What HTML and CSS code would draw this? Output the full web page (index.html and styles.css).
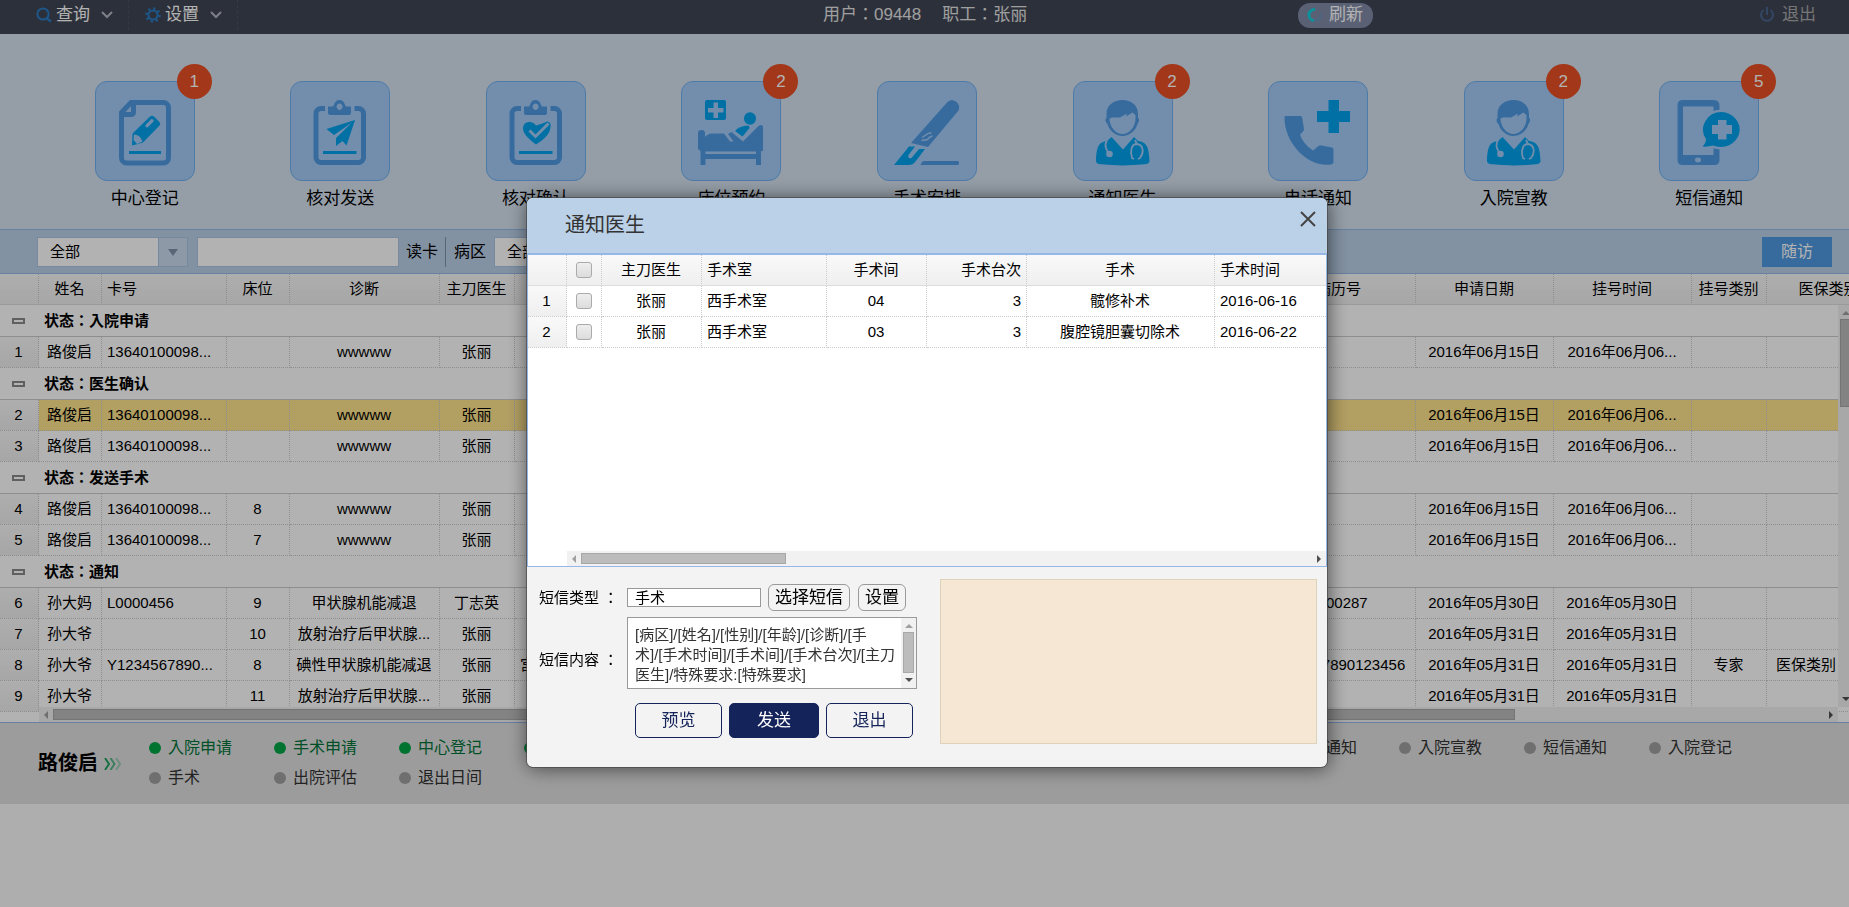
FILE: index.html
```html
<!DOCTYPE html>
<html>
<head>
<meta charset="utf-8">
<title>通知医生</title>
<link rel="stylesheet" href="styles.css">
</head>
<body>
<header class="topbar">
  <nav class="menu">
    <button class="menu-item" type="button">
      <svg width="16" height="16" viewBox="0 0 16 16" fill="none" stroke="#2a7cc4" stroke-width="2"><circle cx="7" cy="7" r="5.6"/><path d="M11 11.500L15 14.500" stroke-width="2.600"/></svg>
      <span>查询</span>
      <svg class="chev" width="12" height="8" viewBox="0 0 12 8" fill="none" stroke="#b4b8c0" stroke-width="2"><path d="M1 1l5 5 5-5"/></svg>
    </button>
    <button class="menu-item" type="button">
      <svg width="16" height="16" viewBox="0 0 16 16" fill="none" stroke="#2a7cc4"><circle cx="8" cy="8" r="4.600" stroke-width="2"/><circle cx="8" cy="8" r="6.600" stroke-width="2.400" stroke-dasharray="2.200 2.984"/></svg>
      <span>设置</span>
      <svg class="chev" width="12" height="8" viewBox="0 0 12 8" fill="none" stroke="#b4b8c0" stroke-width="2"><path d="M1 1l5 5 5-5"/></svg>
    </button>
  </nav>
  <div class="who"><span>用户：09448</span><span>职工：张丽</span></div>
  <button class="refresh" type="button">
    <svg width="16" height="16" viewBox="0 0 16 16" fill="none" stroke-width="3"><path d="M8 2.500A5.500 5.500 0 0 0 7 13.500" stroke="#10d0dc"/><path d="M7 13.500A5.500 5.500 0 0 0 13 6" stroke="#6f93b4"/></svg>
    <span>刷新</span>
  </button>
  <button class="quit" type="button">
    <svg width="16" height="16" viewBox="0 0 16 16" fill="none" stroke="#4a6592" stroke-width="2"><path d="M8 0v8M4.500 3A6 6 0 1 0 11.500 3"/></svg>
    <span>退出</span>
  </button>
</header>

<svg class="defs" width="0" height="0" aria-hidden="true">
  <defs>
    <g id="board">
      <path d="M35 27.500H31a5 5 0 0 0-5 5V76.500a5 5 0 0 0 5 5H68.500a5 5 0 0 0 5-5V32.500a5 5 0 0 0-5-5H64.500" fill="none" stroke="#509ae3" stroke-width="5"/>
      <path fill-rule="evenodd" d="M38 25.500h4.500c2 0 1.500-6.500 7-6.500s5 6.500 7 6.500H61v6.500q0 2-2 2H40q-2 0-2-2zM49.500 22.500a3 3.200 0 1 0 .1 0z" fill="#509ae3"/>
      <path d="M33 71.500H66.500" stroke="#00a1ed" stroke-width="3"/>
    </g>
    <g id="doctor">
      <path fill="#509ae3" fill-rule="evenodd" d="M49.500 19C58 19 65 24 65 33v4c2 1 1 4-.5 6C63 49 57 55 49.500 55S36 49 34.500 43C32 41 32 38 33.500 37v-4C33.500 24 41 19 49.500 19zM36.500 37.500c0 8 6 15.500 13 15.500s13-7.500 13-15.500V34l-2-1.500-1-1-6.500 4 1-3-7 4H39z"/>
      <path fill="#00a1ed" d="M38.500 56L50 68.500 61 56l4 4c8 1 11 5 11.500 20q0 3-5 3.300Q50 85.500 28 83.300q-5-.3-5-3.300C23.500 65 26 61 34 60z"/>
      <path fill="none" stroke="#a4ccf7" stroke-width="1.800" d="M34 59c-3 5-1 11 3 14M62 59l2 4c-6 0-7 8-5 14l2 1M64 63c7 1 7 9 3 14l-2 1"/>
      <circle cx="36.500" cy="73" r="3.300" fill="#a4ccf7"/>
    </g>
  </defs>
</svg>

<main>
<ul class="tiles">
  <li class="tile"><button type="button"><span class="pic"><svg viewBox="0 0 100 100"><path d="M36 21.500H68.500a5 5 0 0 1 5 5V77a5 5 0 0 1-5 5H31.500a5 5 0 0 1-5-5V31.500zM26.500 33.500H36q2.500 0 2.500-2.500V21.500" fill="none" stroke="#509ae3" stroke-width="5"/><path fill="#00a1ed" d="M37 64.500L37.500 52.500 55 35.500Q57 34 59 35.500L64.500 41Q66 43 64.500 44.500L48 61.500 41 63.500z"/><path fill="#a4ccf7" d="M39 53.500q6 0 8.500 7L42 63l-3.500-4zM50.500 44l6-6q2.500 0 2 2.500l-6 6q-2.500 0-2-2.500z"/><path d="M34 71.500H66" stroke="#00a1ed" stroke-width="3"/></svg><b class="badge">1</b></span><span>中心登记</span></button></li>
  <li class="tile"><button type="button"><span class="pic"><svg viewBox="0 0 100 100"><use href="#board"/><path fill="#00a1ed" d="M36.500 48L65 39 56.500 64.500 52.500 60 46 65V57L62 41.500 44 54z"/></svg></span><span>核对发送</span></button></li>
  <li class="tile"><button type="button"><span class="pic"><svg viewBox="0 0 100 100"><use href="#board"/><path fill="#00a1ed" d="M50 63.500C43 58 37 53 37 47.500 37 40 46 39 50 44.500L55 43l6.500-2.500q4 1 3 5.500C64 54 57 59 50 63.500z"/><path d="M43.500 49.500L49.500 55.500 62.500 42.500" fill="none" stroke="#a4ccf7" stroke-width="3"/></svg></span><span>核对确认</span></button></li>
  <li class="tile"><button type="button"><span class="pic"><svg viewBox="0 0 100 100"><path fill="#00a1ed" fill-rule="evenodd" d="M26 19H43q2 0 2 2V37q0 2-2 2H26q-2 0-2-2V21q0-2 2-2zM32.500 21.500v5.500H27v4.500h5.500V37H37v-5.500h5.500V27H37v-5.500z"/><ellipse cx="69" cy="37.500" rx="6" ry="6.200" fill="#00a1ed"/><path fill="#00a1ed" d="M54 50Q58 45 67 44.500 69 45 68.500 47L61.500 55.500z"/><path fill="#509ae3" d="M17 52q0-3 3.500-3t3.500 3v4q3-4 8-3.500H43L49 60.500h3.500L47 53l3.500-2L62 60.500 78 44.500q4-1.500 4 1.500V70H80V84H75V78H24.500V84H19.500V70L17 68z"/><path d="M24.500 71.800H75" stroke="#a4ccf7" stroke-width="2.500"/></svg><b class="badge">2</b></span><span>床位预约</span></button></li>
  <li class="tile"><button type="button"><span class="pic"><svg viewBox="0 0 100 100"><path fill="#509ae3" d="M34 62L70 21.500Q74 17 79 20.500 83.500 24 81.500 29.500L51 66z"/><path d="M45 56.500l4.500-3q2-2 5-1.500M44.500 59.500l6-1q2-3 5-3.500" fill="none" stroke="#a4ccf7" stroke-width="1.500"/><path fill="#00a1ed" d="M17 84L32 65.500H38L31.500 74q-1 4 3 3L42 68h6L38.500 80.500Q36 84 31.500 84z"/><path fill="#509ae3" d="M43.500 84Q45 80 47.500 80H81q1 0 1 2t-1 2z"/></svg></span><span>手术安排</span></button></li>
  <li class="tile"><button type="button"><span class="pic"><svg viewBox="0 0 100 100"><use href="#doctor"/></svg><b class="badge">2</b></span><span>通知医生</span></button></li>
  <li class="tile"><button type="button"><span class="pic"><svg viewBox="0 0 100 100"><path fill="#00a1ed" d="M60.500 19H71V30H82V41H71V52H60.500V41H49V30H60.500z"/><path fill="#509ae3" d="M17 35H32.500Q34 35 34.200 37L36 48Q36 50 34.500 51L32 53.500Q35 63 45 69.500L50.500 65q1.500-1 3-.5L64 66.500q1.500.5 1.500 2V81q0 2-2.500 2.500C40 87 16 62 16.500 36z"/></svg></span><span>电话通知</span></button></li>
  <li class="tile"><button type="button"><span class="pic"><svg viewBox="0 0 100 100"><use href="#doctor"/></svg><b class="badge">2</b></span><span>入院宣教</span></button></li>
  <li class="tile"><button type="button"><span class="pic"><svg viewBox="0 0 100 100"><path fill="#509ae3" fill-rule="evenodd" d="M23 19H55q5.500 0 5.500 6V79q0 5-5 5H23.500q-5 0-5-5V25q0-6 4.500-6zM24 25.500V74H54.500V25.500z"/><ellipse cx="39" cy="79" rx="3" ry="2.400" fill="#a4ccf7"/><path fill="#00a1ed" stroke="#a4ccf7" stroke-width="5" paint-order="stroke" d="M62.500 31A19 17.500 0 1 1 54 64.500Q49 66 43.500 65.500 47 62 47 58A18.500 17.500 0 0 1 62.500 31z"/><path fill="#a4ccf7" d="M59 39h8.500v5H73v9h-5.500v5.500H59V53H53v-9h6z"/></svg><b class="badge">5</b></span><span>短信通知</span></button></li>
</ul>

<form class="toolbar">
  <span class="combo"><select aria-label="状态"><option>全部</option></select></span>
  <input class="card" type="text" aria-label="卡号">
  <button class="plain" type="button">读卡</button>
  <label class="ward" for="ward">病区</label>
  <span class="combo"><select id="ward"><option>全部</option></select></span>
  <button class="follow" type="button">随访</button>
</form>

<section class="panel patients">
  <table class="grid">
    <colgroup><col class="w39"><col class="w63"><col class="w125"><col class="w63"><col class="w150"><col class="w75"><col><col class="w153"><col class="w138"><col class="w138"><col class="w75"><col class="w125"></colgroup>
    <thead><tr><th></th><th>姓名</th><th class="l">卡号</th><th>床位</th><th>诊断</th><th>主刀医生</th><th></th><th>病历号</th><th>申请日期</th><th>挂号时间</th><th>挂号类别</th><th>医保类别</th></tr></thead>
    <tbody>
      <tr class="group"><td><i class="minus"></i></td><td colspan="11">状态：入院申请</td></tr>
      <tr><td>1</td><td>路俊启</td><td class="l">13640100098...</td><td></td><td>wwwww</td><td>张丽</td><td></td><td></td><td>2016年06月15日</td><td>2016年06月06...</td><td></td><td></td></tr>
      <tr class="group"><td><i class="minus"></i></td><td colspan="11">状态：医生确认</td></tr>
      <tr class="sel"><td>2</td><td>路俊启</td><td class="l">13640100098...</td><td></td><td>wwwww</td><td>张丽</td><td></td><td></td><td>2016年06月15日</td><td>2016年06月06...</td><td></td><td></td></tr>
      <tr><td>3</td><td>路俊启</td><td class="l">13640100098...</td><td></td><td>wwwww</td><td>张丽</td><td></td><td></td><td>2016年06月15日</td><td>2016年06月06...</td><td></td><td></td></tr>
      <tr class="group"><td><i class="minus"></i></td><td colspan="11">状态：发送手术</td></tr>
      <tr><td>4</td><td>路俊启</td><td class="l">13640100098...</td><td>8</td><td>wwwww</td><td>张丽</td><td></td><td></td><td>2016年06月15日</td><td>2016年06月06...</td><td></td><td></td></tr>
      <tr><td>5</td><td>路俊启</td><td class="l">13640100098...</td><td>7</td><td>wwwww</td><td>张丽</td><td></td><td></td><td>2016年06月15日</td><td>2016年06月06...</td><td></td><td></td></tr>
      <tr class="group"><td><i class="minus"></i></td><td colspan="11">状态：通知</td></tr>
      <tr><td>6</td><td>孙大妈</td><td class="l">L0000456</td><td>9</td><td>甲状腺机能减退</td><td>丁志英</td><td></td><td>0000287</td><td>2016年05月30日</td><td>2016年05月30日</td><td></td><td></td></tr>
      <tr><td>7</td><td>孙大爷</td><td></td><td>10</td><td>放射治疗后甲状腺...</td><td>张丽</td><td></td><td></td><td>2016年05月31日</td><td>2016年05月31日</td><td></td><td></td></tr>
      <tr><td>8</td><td>孙大爷</td><td class="l">Y1234567890...</td><td>8</td><td>碘性甲状腺机能减退</td><td>张丽</td><td class="l">宫</td><td>1234567890123456</td><td>2016年05月31日</td><td>2016年05月31日</td><td>专家</td><td class="ins">医保类别</td></tr>
      <tr><td>9</td><td>孙大爷</td><td></td><td>11</td><td>放射治疗后甲状腺...</td><td>张丽</td><td></td><td></td><td>2016年05月31日</td><td>2016年05月31日</td><td></td><td></td></tr>
    </tbody>
  </table>
  <div class="hbar main-h"><i class="arr left"></i><i class="thumb"></i><i class="arr right"></i></div>
  <div class="vbar main-v"><i class="arr up"></i><i class="thumb"></i><i class="arr down"></i></div>
</section>

<section class="progress">
  <h2>路俊启</h2>
  <svg class="flow" width="18" height="12" viewBox="0 0 18 12" fill="none" stroke="#1fa35f" stroke-width="2"><path d="M1 0l4 6-4 6"/><path d="M6.500 0l4 6-4 6" opacity=".7"/><path d="M12 0l4 6-4 6" opacity=".35"/></svg>
  <ol class="steps">
    <li class="done">入院申请</li><li class="done">手术申请</li><li class="done">中心登记</li><li class="done">核对发送</li><li>核对确认</li><li>床位预约</li><li>手术安排</li><li>通知医生</li><li>麻醉会诊</li><li>电话通知</li><li>入院宣教</li><li>短信通知</li><li>入院登记</li><li>手术</li><li>出院评估</li><li>退出日间</li>
  </ol>
</section>
</main>

<div class="mask">
  <div class="dialog" role="dialog" aria-labelledby="dlg-title">
    <div class="dlg-head">
      <h1 id="dlg-title">通知医生</h1>
      <button class="close" type="button" aria-label="关闭"><svg width="16" height="16" viewBox="0 0 16 16" stroke="#444" stroke-width="2"><path d="M1 1l14 14M15 1L1 15"/></svg></button>
    </div>
    <div class="panel ops">
      <table class="grid">
        <colgroup><col class="w39"><col class="w35"><col class="w100"><col class="w125"><col class="w100"><col class="w100"><col class="w188"><col></colgroup>
        <thead><tr><th></th><th><input type="checkbox" aria-label="全选"></th><th>主刀医生</th><th class="l">手术室</th><th>手术间</th><th class="r">手术台次</th><th>手术</th><th class="l">手术时间</th></tr></thead>
        <tbody>
          <tr><td>1</td><td><input type="checkbox" aria-label="选择 1"></td><td>张丽</td><td class="l">西手术室</td><td>04</td><td class="r">3</td><td>髋修补术</td><td class="l">2016-06-16</td></tr>
          <tr><td>2</td><td><input type="checkbox" aria-label="选择 2"></td><td>张丽</td><td class="l">西手术室</td><td>03</td><td class="r">3</td><td>腹腔镜胆囊切除术</td><td class="l">2016-06-22</td></tr>
        </tbody>
      </table>
      <div class="hbar ops-h"><i class="arr left"></i><i class="thumb"></i><i class="arr right"></i></div>
    </div>
    <div class="dlg-body">
      <form class="sms">
        <label for="type">短信类型 ：</label>
        <div class="line"><input id="type" type="text" value="手术"><button class="mini" type="button">选择短信</button><button class="mini" type="button">设置</button></div>
        <label class="low" for="content">短信内容 ：</label>
        <div class="area">
          <textarea id="content">[病区]/[姓名]/[性别]/[年龄]/[诊断]/[手术]/[手术时间]/[手术间]/[手术台次]/[主刀医生]/特殊要求:[特殊要求]</textarea>
          <div class="vbar area-v"><i class="arr up"></i><i class="thumb"></i><i class="arr down"></i></div>
        </div>
        <div class="actions"><button type="button">预览</button><button class="primary" type="button">发送</button><button type="button">退出</button></div>
      </form>
      <div class="preview"></div>
    </div>
  </div>
</div>
</body>
</html>
```
FILE: styles.css
```css
* { box-sizing: border-box; }
body {
  margin: 0;
  min-height: 100vh;
  overflow: hidden;
  background: #fafafa;
  color: #000;
  font: 15px/20px "Liberation Sans", "Noto Sans CJK JP", sans-serif;
}
button, input, select, textarea { font: inherit; color: inherit; margin: 0; }
button { padding: 0; border: 0; background: none; }
ul, ol { margin: 0; padding: 0; list-style: none; }
h1, h2 { margin: 0; }
svg { display: block; }
.defs { position: absolute; }

/* top bar */
.topbar {
  display: grid;
  grid-template-columns: 823px 475px auto 1fr;
  align-items: center;
  height: 34px;
  padding-bottom: 4px;
  background: #404554;
  color: #fff;
  font-size: 17px;
}
.menu { display: flex; padding-left: 20px; height: 30px; }
.menu-item {
  display: flex;
  align-items: center;
  gap: 4px;
  width: 109px;
  padding-left: 16px;
  border-right: 1px dashed #4d5262;
}
.menu-item .chev { margin-left: 7px; }
.who { display: flex; gap: 21px; color: #e4e4e4; }
.refresh {
  display: flex;
  align-items: center;
  gap: 6px;
  height: 25px;
  padding: 0 10px 0 9px;
  border-radius: 12px;
  background: #828ba8;
}
.quit {
  display: flex;
  align-items: center;
  gap: 7px;
  justify-self: end;
  margin-right: 33px;
  color: #aaa;
}

/* function tiles */
.tiles {
  display: grid;
  grid-template-columns: repeat(9, 1fr);
  padding: 47px 42px 16px 47px;
  background: #d6e3f0;
}
.tile { display: flex; justify-content: center; }
.tile button { font-size: 17px; line-height: 28px; }
.pic {
  position: relative;
  display: block;
  width: 100px;
  height: 100px;
  margin-bottom: 4px;
  border: 1px solid #6fb0f2;
  border-radius: 12px;
  background: #a4ccf7;
}
.pic svg { margin: -1px; }
.badge {
  position: absolute;
  top: -18px;
  right: -18px;
  width: 35px;
  height: 35px;
  border-radius: 50%;
  background: #e94f24;
  color: #fff;
  font-weight: 400;
  line-height: 35px;
}

/* filter bar */
.toolbar {
  display: flex;
  align-items: center;
  height: 45px;
  padding: 0 17px 0 37px;
  border: solid #95b8e7;
  border-width: 1px 0;
  background: #bbd1e8;
  font-size: 16px;
}
.combo { position: relative; display: block; width: 151px; height: 30px; }
.combo select {
  appearance: none;
  width: 100%;
  height: 100%;
  padding: 0 12px;
  border: 1px solid #a9c4e4;
  border-radius: 0;
  background: #fff;
  font-size: 15px;
}
.combo::before {
  content: "";
  position: absolute;
  top: 1px;
  right: 1px;
  width: 28px;
  height: 28px;
  border-left: 1px solid #a9c4e4;
  background: #cbdcee;
}
.combo::after {
  content: "";
  position: absolute;
  top: 12px;
  right: 10px;
  border: 5px solid transparent;
  border-top: 7px solid #7f93ab;
  border-bottom: 0;
}
.card {
  width: 202px;
  height: 30px;
  margin-left: 9px;
  border: 1px solid #a9c4e4;
  background: #fff;
}
.plain { margin-left: 7px; }
.ward {
  margin: 0 8px 0 7px;
  padding: 5px 0 5px 8px;
  border-left: 1px solid #7f93ab;
}
.follow {
  width: 70px;
  height: 30px;
  margin-left: auto;
  background: #509ae3;
  color: #fff;
}

/* data grids */
.panel { position: relative; overflow: hidden; background: #fff; }
.patients { height: 449px; border-bottom: 1px solid #95b8e7; }
.grid { border-spacing: 0; table-layout: fixed; width: 1892px; }
.w35 { width: 35px; } .w39 { width: 39px; } .w63 { width: 63px; }
.w75 { width: 75px; } .w100 { width: 100px; } .w125 { width: 125px; }
.w138 { width: 138px; } .w150 { width: 150px; } .w153 { width: 153px; }
.w188 { width: 188px; }
.grid th, .grid td {
  height: 31px;
  padding: 0 1px 0 0;
  border-right: 1px dotted #ccc;
  border-bottom: 1px dotted #ccc;
  text-align: center;
  font-weight: 400;
  white-space: nowrap;
  overflow: hidden;
}
.grid th { background: linear-gradient(#f9f9f9, #efefef); border-bottom: 1px solid #ddd; }
.grid td:first-child { background: linear-gradient(#f9f9f9, #efefef); }
.grid .l { text-align: left; padding-left: 5px; }
.grid .r { text-align: right; padding-right: 5px; }
.grid .ins { text-align: left; padding-left: 9px; }
.grid .sel td { background: #ffe48d; }
.grid .sel td:first-child { background: linear-gradient(#f9f9f9, #efefef); }
.grid .group td {
  height: 32px;
  padding-left: 5px;
  border-right: 0;
  border-bottom: 1px solid #ccc;
  background: #fff;
  text-align: left;
  font-weight: 700;
}
.grid .group td:first-child { padding-left: 12px; }
.minus { display: block; width: 13px; height: 6px; border: 2px solid #8a8a8a; background: #fff; }
.grid input {
  appearance: none;
  display: block;
  width: 16px;
  height: 16px;
  margin: 0 auto;
  border: 1px solid #aaa;
  border-radius: 3px;
  background: linear-gradient(#eee, #dcdcdc);
}

/* scrollbars */
.hbar, .vbar { position: absolute; display: flex; align-items: center; background: #f1f1f1; }
.vbar { flex-direction: column; }
.thumb { background: #bcbcbc; border: 1px solid #a8a8a8; }
.hbar { height: 15px; padding: 0 5px; }
.hbar .thumb { height: 11px; margin-left: 5px; }
.vbar { width: 15px; padding: 6px 0; }
.vbar .thumb { width: 11px; margin-top: 4px; }
.arr { border: 4px solid transparent; }
.arr.left { border-left: 0; border-right-color: #a0a0a0; }
.arr.right { border-right: 0; border-left-color: #505050; margin-left: auto; }
.arr.up { border-top: 0; border-bottom-color: #a0a0a0; }
.arr.down { border-bottom: 0; border-top-color: #505050; margin-top: auto; }
.main-h { left: 39px; right: 11px; bottom: 0; }
.main-h .thumb { width: 1462px; }
.main-v { top: 31px; right: -4px; bottom: 15px; }
.main-v .thumb { height: 88px; }
.ops-h { left: 39px; right: 0; bottom: 0; }
.ops-h .thumb { width: 205px; }
.area-v { top: 1px; right: 1px; bottom: 1px; }
.area-v .thumb { height: 41px; }

/* patient progress */
.progress {
  display: flex;
  align-items: flex-start;
  min-height: 81px;
  padding: 15px 0 8px 38px;
  background: #e0e0e0;
}
.progress h2 { width: 66px; padding-top: 11px; font-size: 20px; line-height: 28px; }
.flow { margin: 20px 27px 0 0; }
.steps {
  display: grid;
  grid-template-columns: repeat(13, 125px);
  row-gap: 10px;
  font-size: 16px;
  color: #333;
}
.steps li { display: flex; align-items: center; gap: 7px; white-space: nowrap; }
.steps li::before { content: ""; width: 12px; height: 12px; border-radius: 50%; background: #9f9f9f; }
.steps .done { color: #007339; }
.steps .done::before { background: #00a546; }

/* dialog */
.mask {
  position: fixed;
  inset: 0;
  display: flex;
  align-items: flex-start;
  justify-content: center;
  padding: 198px 0 0 5px;
  background: rgba(0, 0, 0, .3);
}
.dialog {
  width: 800px;
  border-radius: 6px;
  background: #f3f3f3;
  box-shadow: 0 0 0 1px rgba(70, 70, 70, .7), 1px 1px 20px rgba(0, 0, 0, .6);
}
.dlg-head {
  display: flex;
  justify-content: space-between;
  align-items: flex-start;
  padding: 13px 11px 14px 38px;
  border-bottom: 2px solid #95b8e7;
  border-radius: 6px 6px 0 0;
  background: #bbd1e8;
}
.dlg-head h1 { color: #333; font-size: 20px; font-weight: 400; line-height: 28px; }
.ops { height: 312px; border: solid #95b8e7; border-width: 0 1px 1px; }
.ops .grid { width: 100%; }
.ops .grid th:last-child, .ops .grid td:last-child { border-right: 0; }
.dlg-body { display: flex; justify-content: space-between; padding: 12px 10px 23px 12px; }
.sms {
  display: grid;
  grid-template-columns: 88px 290px;
  align-items: center;
  align-content: start;
  row-gap: 6px;
  padding-top: 5px;
}
.low { padding-top: 14px; }
.line { display: flex; align-items: center; gap: 7px; }
.line input {
  width: 134px;
  height: 19px;
  padding: 0 7px;
  border: 1px solid #999;
  background: #fff;
}
.mini { height: 27px; padding: 0 6px; border: 1px solid #999; border-radius: 6px; font-size: 17px; }
.mini + .mini { margin-left: 1px; }
.area { position: relative; height: 72px; }
.area textarea {
  display: block;
  width: 100%;
  height: 100%;
  padding: 7px 20px 0 7px;
  border: 1px solid #999;
  border-radius: 0;
  background: #fff;
  color: #333;
  overflow: hidden;
  resize: none;
}
.actions { grid-column: 2; display: flex; gap: 7px; padding: 8px 4px 0 8px; }
.actions button {
  width: 87px;
  height: 35px;
  border: 1px solid #14235a;
  border-radius: 5px;
  color: #14235a;
  font-size: 17px;
}
.actions .primary { width: 90px; background: #14235a; color: #fff; }
.preview { width: 377px; height: 165px; border: 1px solid #dcd3b9; background: #f6e6d4; }
```
